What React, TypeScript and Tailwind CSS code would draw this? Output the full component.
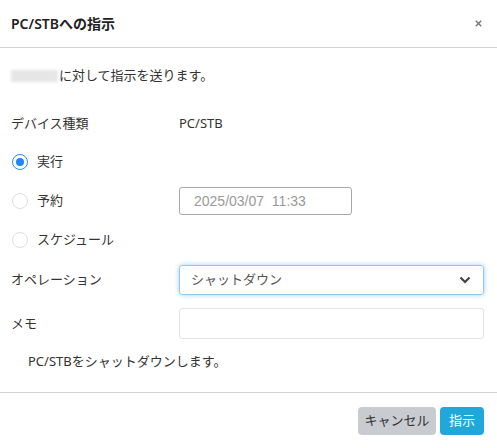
import React from "react";

const font = { fontFamily: "'Noto Sans','Noto Sans CJK JP',sans-serif" };

function Radio({ checked }: { checked?: boolean }) {
  return checked ? (
    <span className="w-[16px] h-[16px] rounded-full border border-[#2d8cf0] flex items-center justify-center bg-white">
      <span className="w-[8px] h-[8px] rounded-full bg-[#1f86f5]" />
    </span>
  ) : (
    <span className="w-[16px] h-[16px] rounded-full border border-[#dcdee2] bg-white" />
  );
}

export default function App() {
  return (
    <div className="w-[497px] h-[448px] bg-white text-[13px] text-[#333] flex flex-col overflow-hidden" style={font}>
      <div className="h-[48px] border-b border-[#d0d3d8] flex items-center justify-between pl-[11px] pr-[15px]">
        <span className="text-[14px] font-semibold text-[#222]">PC/STBへの指示</span>
        <svg width="7" height="7" viewBox="0 0 7 7">
          <path d="M0.8 0.8L6.2 6.2M6.2 0.8L0.8 6.2" stroke="#777" strokeWidth="1.5" />
        </svg>
      </div>
      <div className="flex flex-col pl-[11px] pr-[13px]">
        <div className="mt-[16px] h-6 flex items-center">
          <span className="w-[47px] h-[12px] bg-[#e6e6e6] blur-[1.5px] mr-[1px]" />
          <span>に対して指示を送ります。</span>
        </div>
        <div className="mt-6 h-6 flex items-center">
          <span className="w-[168px]">デバイス種類</span>
          <span>PC/STB</span>
        </div>
        <div className="mt-[14px] h-6 flex items-center gap-[9px] pl-[1px]">
          <Radio checked />
          <span>実行</span>
        </div>
        <div className="mt-[13px] h-[28px] flex items-center">
          <div className="w-[168px] flex items-center gap-[9px] pl-[1px]">
            <Radio />
            <span>予約</span>
          </div>
          <div className="w-[173px] h-[28px] border border-[#a9a9a9] rounded-[3px] flex items-center pl-[14px] text-[#999] text-[14px]" style={{ fontFamily: "'Liberation Sans',Arial,sans-serif" }}>
            2025/03/07&nbsp;&nbsp;11:33
          </div>
        </div>
        <div className="mt-[13px] h-6 flex items-center gap-[9px] pl-[1px]">
          <Radio />
          <span>スケジュール</span>
        </div>
        <div className="mt-[13px] h-[30px] flex items-center">
          <span className="w-[168px]">オペレーション</span>
          <div className="flex-1 h-[30px] border border-[#8ecbf0] rounded-[3px] shadow-[0_0_5px_rgba(102,175,233,0.6)] flex items-center justify-between pl-[11px] pr-[12px] text-[#555]">
            <span>シャットダウン</span>
            <svg width="12" height="8" viewBox="0 0 12 8">
              <path d="M1.5 1.5L6 6L10.5 1.5" stroke="#444" strokeWidth="2.2" fill="none" />
            </svg>
          </div>
        </div>
        <div className="mt-[13px] h-[31px] flex items-center">
          <span className="w-[168px]">メモ</span>
          <div className="flex-1 h-[31px] border border-[#e3e3e3] rounded-[3px]" />
        </div>
        <div className="mt-[11px] h-6 flex items-center pl-[17px]">
          <span>PC/STBをシャットダウンします。</span>
        </div>
      </div>
      <div className="mt-[18px] border-t border-[#d0d3d8] flex justify-end gap-[4px] pt-[14px] pr-[13px]">
        <button className="w-[78px] h-[28px] rounded-[4px] bg-[#c8ccd1] text-[#333] text-[13px]">キャンセル</button>
        <button className="w-[44px] h-[28px] rounded-[4px] bg-[#20a8db] text-white text-[13px]">指示</button>
      </div>
    </div>
  );
}
